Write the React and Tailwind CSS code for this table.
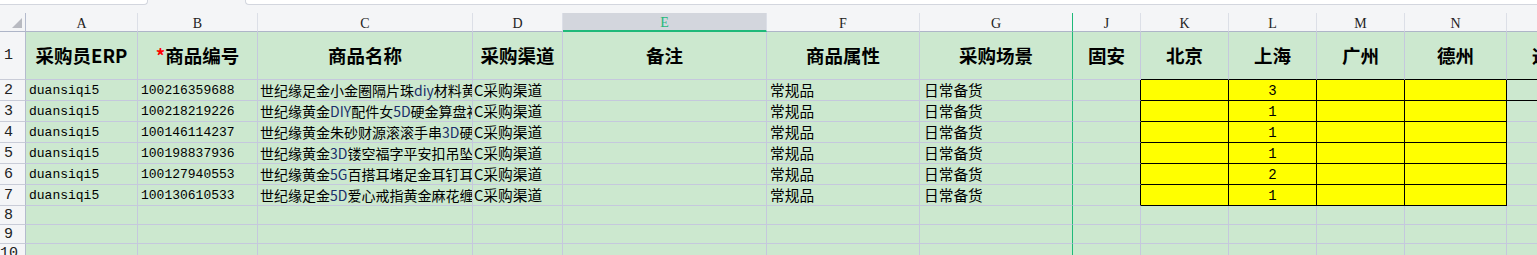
import React from 'react';

// column geometry: width class + letter + header label
const cols = [
  { key: 'A', w: 'w-[112px]', label: '采购员ERP' },
  { key: 'B', w: 'w-[120px]', label: '商品编号', star: true },
  { key: 'C', w: 'w-[215px]', label: '商品名称' },
  { key: 'D', w: 'w-[90px]', label: '采购渠道' },
  { key: 'E', w: 'w-[204px]', label: '备注' },
  { key: 'F', w: 'w-[153px]', label: '商品属性' },
  { key: 'G', w: 'w-[153px]', label: '采购场景' },
  { key: 'J', w: 'w-[68px]', label: '固安' },
  { key: 'K', w: 'w-[88px]', label: '北京' },
  { key: 'L', w: 'w-[88px]', label: '上海' },
  { key: 'M', w: 'w-[88px]', label: '广州' },
  { key: 'N', w: 'w-[102px]', label: '德州' },
  { key: 'O', w: 'w-[88px]', label: '通州' },
];

const CITY = ['K', 'L', 'M', 'N'];

// product names split into [text, isLatin] parts
const rows = [
  { id: '100216359688', name: [['世纪缘足金小金圈隔片珠'], ['diy', 1], ['材料黄']], sh: '3' },
  { id: '100218219226', name: [['世纪缘黄金'], ['DIY', 1], ['配件女'], ['5D', 1], ['硬金算盘衬']], sh: '1' },
  { id: '100146114237', name: [['世纪缘黄金朱砂财源滚滚手串'], ['3D', 1], ['硬']], sh: '1' },
  { id: '100198837936', name: [['世纪缘黄金'], ['3D', 1], ['镂空福字平安扣吊坠']], sh: '1' },
  { id: '100127940553', name: [['世纪缘黄金'], ['5G', 1], ['百搭耳堵足金耳钉耳']], sh: '2' },
  { id: '100130610533', name: [['世纪缘足金'], ['5D', 1], ['爱心戒指黄金麻花缠']], sh: '1' },
];

const mono = "font-['Liberation_Mono','DejaVu_Sans_Mono',monospace]";
const cjk = "font-['Noto_Sans_CJK_SC','Noto_Sans',sans-serif]";

const cellBase = 'shrink-0 h-full border-r border-b overflow-hidden whitespace-nowrap flex items-center';

function ColHeader() {
  return (
    <div className="flex h-[19px] bg-[#f4f5f7]">
      <div className="shrink-0 w-[26px] h-full border-r border-b border-r-[#b4bbcd] border-b-[#aeb5c8] relative">
        {/* select-all corner */}
        <svg width="26" height="19" viewBox="0 0 26 19" className="absolute left-0 top-0">
          <polygon points="22,5 22,15 12,15" fill="#b8bac1" />
        </svg>
      </div>
      {cols.map((c) => {
        const sel = c.key === 'E';
        const edge = c.key === 'G' ? 'border-r-[#1fb97a]' : 'border-r-[#dcdfe7]';
        return (
          <div
            key={c.key}
            className={`shrink-0 h-full border-r flex items-center justify-center pt-[2px] font-['Liberation_Serif',serif] text-[14px] ${c.w} ${edge} ${
              sel ? 'bg-[#d3d6dd] border-b-2 border-b-[#1fb97a] text-[#1fb97a]' : 'border-b border-b-[#aeb5c8] text-[#222]'
            }`}
          >
            {c.key}
          </div>
        );
      })}
    </div>
  );
}

function RowNum({ n }) {
  return (
    <div className={`shrink-0 w-[26px] h-full bg-[#f4f5f7] border-r border-b border-r-[#b4bbcd] border-b-[#c9ccd8] flex items-center ${mono} text-[15px] text-[#222]`}>
      <span className="w-[17px] text-center pt-[2px]">{n}</span>
    </div>
  );
}

function HeaderRow() {
  return (
    <div className="flex h-[48px]">
      <RowNum n={1} />
      {cols.map((c) => {
        const edge = c.key === 'G' ? 'border-r-[#1fb97a]' : 'border-r-[#c5c8dd]';
        const bottom = CITY.includes(c.key) || c.key === 'O' ? 'border-b-black' : 'border-b-[#c5c8dd]';
        return (
          <div key={c.key} className={`${cellBase} ${c.w} ${edge} ${bottom} justify-center ${cjk} font-bold text-[18.5px] text-black`}>
            {c.star && <span className="text-[#ff0000]">*</span>}
            {c.label}
          </div>
        );
      })}
    </div>
  );
}

function DataRow({ n, r }) {
  return (
    <div className="flex h-[21px]">
      <RowNum n={n} />
      {cols.map((c) => {
        let edge = 'border-r-[#c5c8dd]';
        let bottom = 'border-b-[#c5c8dd]';
        let bg = '';
        if (c.key === 'G') edge = 'border-r-[#1fb97a]';
        if (c.key === 'J') edge = 'border-r-black';
        if (CITY.includes(c.key)) {
          edge = 'border-r-black';
          bottom = 'border-b-black';
          bg = 'bg-[#ffff00]';
        }
        if (c.key === 'O' && n === 2) bottom = 'border-b-black';

        let content = null;
        if (c.key === 'A') content = <span className={`pl-[3px] pt-[2px] ${mono} text-[13px]`}>duansiqi5</span>;
        if (c.key === 'B') content = <span className={`pl-[3px] pt-[2px] ${mono} text-[13px]`}>{r.id}</span>;
        if (c.key === 'C')
          content = (
            <span className={`pl-[2px] ${cjk} text-[14px]`}>
              {r.name.map(([t, latin], i) => (
                <span key={i} className={latin ? 'text-[#1a2f6a]' : ''}>{t}</span>
              ))}
            </span>
          );
        if (c.key === 'D') content = <span className={`pl-[1px] ${cjk} text-[14.7px]`}>C采购渠道</span>;
        if (c.key === 'F') content = <span className={`pl-[3px] ${cjk} text-[14.7px]`}>常规品</span>;
        if (c.key === 'G') content = <span className={`pl-[4px] ${cjk} text-[14.7px]`}>日常备货</span>;
        if (c.key === 'L') content = <span className={`w-full text-center pt-[2px] ${mono} text-[14px]`}>{r.sh}</span>;

        return (
          <div key={c.key} className={`${cellBase} ${c.w} ${edge} ${bottom} ${bg} text-black`}>
            {content}
          </div>
        );
      })}
    </div>
  );
}

function EmptyRow({ n, h }) {
  return (
    <div className={`flex ${h}`}>
      <RowNum n={n} />
      {cols.map((c) => (
        <div
          key={c.key}
          className={`${cellBase} ${c.w} border-b-[#c5c8dd] ${c.key === 'G' ? 'border-r-[#1fb97a]' : 'border-r-[#c5c8dd]'}`}
        />
      ))}
    </div>
  );
}

export default function App() {
  return (
    <div className="w-[1537px] h-[255px] overflow-hidden bg-[#cce8cf] text-black">
      {/* sheet tab strip remnant */}
      <div className="h-[13px] bg-[#f4f5f7] flex items-start">
        <div className="w-[148px] h-[5px] bg-white border-r border-b border-[#d3d6de] rounded-br-[4px]" />
        <div className="w-[97px] h-[5px]" />
        <div className="flex-1 h-[5px] bg-white border-l border-b border-[#d3d6de] rounded-bl-[4px]" />
      </div>
      <ColHeader />
      <HeaderRow />
      {rows.map((r, i) => (
        <DataRow key={r.id} n={i + 2} r={r} />
      ))}
      <EmptyRow n={8} h="h-[19px]" />
      <EmptyRow n={9} h="h-[19px]" />
      <EmptyRow n={10} h="h-[19px]" />
    </div>
  );
}
